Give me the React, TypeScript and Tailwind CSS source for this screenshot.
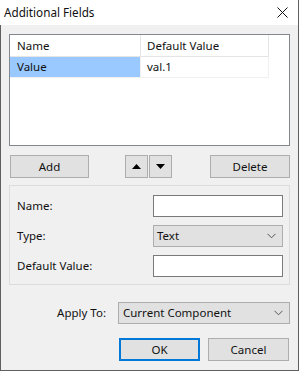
import React from "react";

const font = { fontFamily: '"Segoe UI", "Noto Sans", "Open Sans", sans-serif' };

function Chevron() {
  return (
    <svg width="9" height="6" viewBox="0 0 9 6" className="shrink-0">
      <path d="M0.5 0.8 L4.5 4.8 L8.5 0.8" fill="none" stroke="#555" strokeWidth="1" />
    </svg>
  );
}

export default function App() {
  return (
    <div
      className="w-[299px] h-[371px] flex flex-col bg-[#f0f0f0] text-[11.5px] text-[#111] leading-none overflow-hidden"
      style={font}
    >
      {/* Title bar */}
      <div className="h-[25px] shrink-0 bg-white flex items-center justify-between pl-[4px] pr-[10px] border-r border-[#5f5f5f]">
        <span className="text-[11.7px]">Additional Fields</span>
        <svg width="11" height="11" viewBox="0 0 11 11">
          <path d="M0.5 0.5 L10.5 10.5 M10.5 0.5 L0.5 10.5" stroke="#111" strokeWidth="1" />
        </svg>
      </div>

      {/* Body */}
      <div className="flex-1 flex flex-col border-l border-r border-b border-[#5f5f5f] px-[8px] pt-[9px]">
        {/* List view */}
        <div className="h-[112px] bg-white border border-[#828790] flex flex-col">
          <div className="flex h-[22px] border-b border-[#e5e5e5] w-[259px]">
            <div className="w-[131px] border-r border-[#e5e5e5] flex items-center pl-[7px]">Name</div>
            <div className="w-[128px] border-r border-[#e5e5e5] flex items-center pl-[6px]">Default Value</div>
          </div>
          <div className="flex h-[21px] border-b border-[#f0f0f0] w-[259px]">
            <div className="w-[131px] bg-[#99c9ff] flex items-center pl-[7px] border-r border-[#f0f0f0]">Value</div>
            <div className="w-[128px] flex items-center pl-[6px] border-r border-[#f0f0f0]">val.1</div>
          </div>
        </div>

        {/* Buttons row */}
        <div className="mt-[9px] flex items-center pl-[1px]">
          <button className="w-[79px] h-[23px] bg-[#e1e1e1] border border-[#adadad] flex items-center justify-center">
            Add
          </button>
          <div className="flex-1 flex justify-center gap-[1px] pr-[2px]">
            <button className="w-[23px] h-[23px] bg-[#e1e1e1] border border-[#adadad] flex items-center justify-center">
              <svg width="9" height="5" viewBox="0 0 9 5">
                <path d="M0 5 L4.5 0 L9 5 Z" fill="#000" />
              </svg>
            </button>
            <button className="w-[23px] h-[23px] bg-[#e1e1e1] border border-[#adadad] flex items-center justify-center">
              <svg width="9" height="5" viewBox="0 0 9 5">
                <path d="M0 0 L9 0 L4.5 5 Z" fill="#000" />
              </svg>
            </button>
          </div>
          <button className="w-[80px] h-[23px] bg-[#e1e1e1] border border-[#adadad] flex items-center justify-center">
            Delete
          </button>
        </div>

        {/* Group panel */}
        <div className="mt-[7px] h-[100px] border border-[#dcdcdc] flex flex-col gap-[8px] pt-[9px] pl-[7px] pr-[6px]">
          <div className="flex items-center justify-between h-[22px]">
            <span>Name:</span>
            <div className="w-[130px] h-[22px] bg-white border border-[#7a7a7a]" />
          </div>
          <div className="flex items-center justify-between h-[22px]">
            <span>Type:</span>
            <div className="w-[130px] h-[22px] bg-[#e1e1e1] border border-[#adadad] flex items-center justify-between pl-[3px] pr-[6px]">
              <span>Text</span>
              <Chevron />
            </div>
          </div>
          <div className="flex items-center justify-between h-[22px]">
            <span>Default Value:</span>
            <div className="w-[130px] h-[22px] bg-white border border-[#7a7a7a]" />
          </div>
        </div>

        {/* Apply To */}
        <div className="mt-[17px] flex items-center justify-end h-[22px]">
          <span className="mr-[12px]">Apply To:</span>
          <div className="w-[172px] h-[22px] bg-[#e1e1e1] border border-[#adadad] flex items-center justify-between pl-[4px] pr-[6px]">
            <span>Current Component</span>
            <Chevron />
          </div>
        </div>

        {/* OK / Cancel */}
        <div className="mt-[14px] flex justify-end gap-[8px] pr-[1px]">
          <button className="w-[81px] h-[23px] bg-[#e1e1e1] border-2 border-[#0078d7] flex items-center justify-center">
            OK
          </button>
          <button className="w-[81px] h-[23px] bg-[#e1e1e1] border border-[#adadad] flex items-center justify-center">
            Cancel
          </button>
        </div>
      </div>
    </div>
  );
}
